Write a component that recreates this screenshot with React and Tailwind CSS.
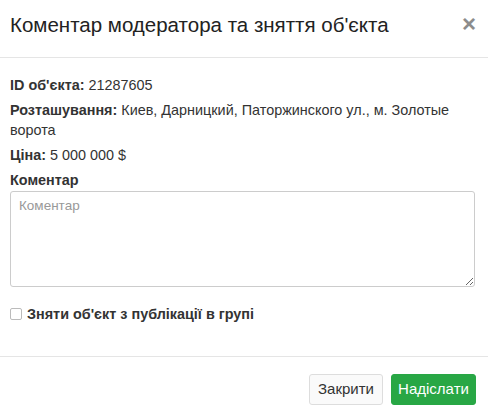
export default function App() {
  return (
    <div className="w-[488px] h-[415px] bg-white text-[#333] overflow-hidden" style={{ fontFamily: '"Liberation Sans", Arial, sans-serif' }}>
      <div className="h-[58px] border-b border-[#e5e5e5] flex items-start justify-between pl-[10px] pr-[12px] pt-[11px]">
        <h4 className="text-[20.5px] leading-[28px] text-[#222] font-normal m-0">Коментар модератора та зняття об'єкта</h4>
        <button className="text-[24px] leading-[24px] font-bold text-[#8c8c8c] mt-[1px]">×</button>
      </div>
      <div className="pl-[10px] pr-[13px] pt-[17px] text-[14.4px] leading-[20px]">
        <p className="mb-[5px]"><b>ID об'єкта:</b> 21287605</p>
        <p className="mb-[5px]"><b>Розташування:</b> Киев, Дарницкий, Паторжинского ул., м. Золотые ворота</p>
        <p className="mb-[5px]"><b>Ціна:</b> 5 000 000 $</p>
        <label className="block font-bold mb-[1px]">Коментар</label>
        <textarea
          placeholder="Коментар"
          className="block w-full h-[96px] border border-[#ccc] rounded-[3px] px-[8px] py-[5px] text-[13.5px] leading-[18px] placeholder:text-[#999] resize-y outline-none"
        />
        <label className="flex items-center gap-[5px] mt-[17px] h-[20px] font-bold">
          <span className="w-[12px] h-[12px] border border-[#bbb] rounded-[2px] bg-white inline-block" />
          Зняти об'єкт з публікації в групі
        </label>
      </div>
      <div className="mt-[32px] border-t border-[#e5e5e5] flex justify-end gap-[8px] pr-[12px] pt-[17px]">
        <button className="h-[31px] w-[74px] border border-[#ddd] rounded-[3px] bg-[#fafafa] text-[15px] text-[#333]">Закрити</button>
        <button className="h-[31px] w-[85px] border border-[#28a745] rounded-[3px] bg-[#28a745] text-[15px] text-white">Надіслати</button>
      </div>
    </div>
  );
}
